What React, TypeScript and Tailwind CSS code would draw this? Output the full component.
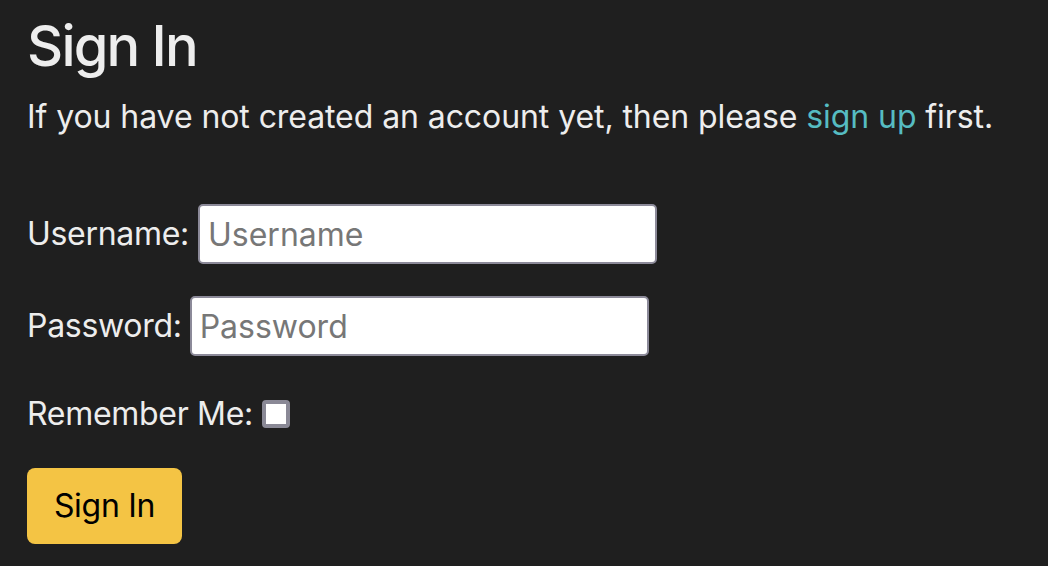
import React from "react";

export default function App() {
  return (
    <div
      className="w-[1048px] h-[566px] bg-[#1f1f1f] text-[#ededed] overflow-hidden pl-[27px]"
      style={{ fontFamily: "Inter, 'Noto Sans', sans-serif" }}
    >
      <h1 className="text-[56px] leading-[67px] font-medium mt-[13px] tracking-[-1.8px]">Sign In</h1>
      <p className="text-[32px] leading-[48px] mt-[13px] tracking-[-0.08px]">
        If you have not created an account yet, then please{" "}
        <span className="text-[#56bcc2]">sign up</span> first.
      </p>
      <div className="flex items-center mt-[63px] gap-[9px]">
        <label className="text-[32px] leading-[48px] tracking-[-0.3px]">Username:</label>
        <input
          className="w-[459px] h-[60px] bg-white border-2 border-[#8c8a99] rounded-[5px] px-[8px] text-[32px] text-black placeholder:text-[#777777] outline-none"
          placeholder="Username"
        />
      </div>
      <div className="flex items-center mt-[32px] gap-[8px]">
        <label className="text-[32px] leading-[48px] tracking-[-0.3px]">Password:</label>
        <input
          type="password"
          className="w-[459px] h-[60px] bg-white border-2 border-[#8c8a99] rounded-[5px] px-[8px] text-[32px] text-black placeholder:text-[#777777] outline-none"
          placeholder="Password"
        />
      </div>
      <div className="flex items-center mt-[34px] gap-[9px] h-[48px]">
        <label className="text-[32px] leading-[48px] tracking-[-0.3px]">Remember Me:</label>
        <span className="w-[28px] h-[28px] bg-white border-[4px] border-[#8a8996] rounded-[4px] inline-block" />
      </div>
      <button className="mt-[30px] w-[155px] h-[76px] bg-[#f4c444] rounded-[8px] text-[32px] text-black tracking-[-0.3px]">
        Sign In
      </button>
    </div>
  );
}
